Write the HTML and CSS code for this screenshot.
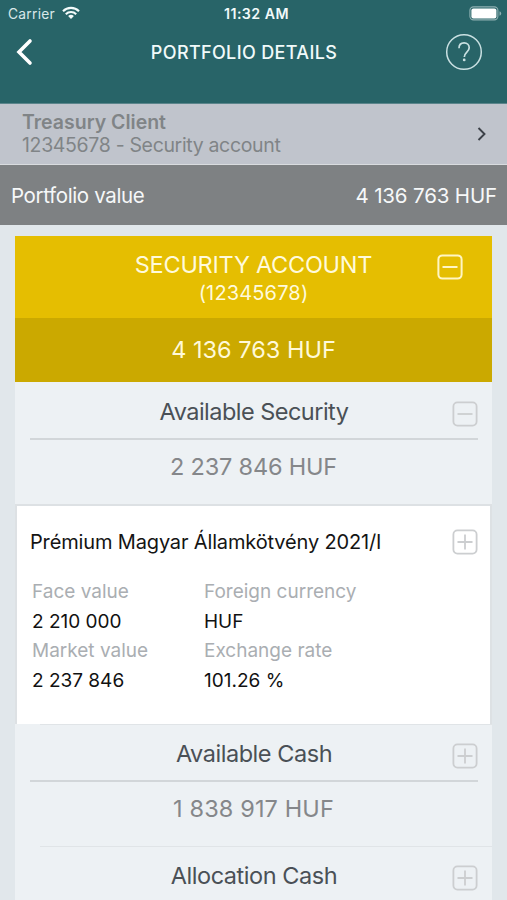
FILE: index.html
```html
<!DOCTYPE html>
<html lang="en">
<head>
<meta charset="utf-8">
<title>Portfolio details</title>
<link rel="stylesheet" href="styles.css">
</head>
<body>
<header class="header">
  <div class="status">
    <div class="status-left"><span class="carrier">Carrier</span>
      <svg class="wifi" width="18" height="14" viewBox="0 0 18 14"><g fill="none" stroke="#f4fbfb" stroke-width="2.1"><path d="M1 5.2a11.3 11.3 0 0 1 16 0"/><path d="M3.8 8.2a7.3 7.3 0 0 1 10.4 0"/></g><path d="M9 13l-2.9-2.9a4.1 4.1 0 0 1 5.8 0z" fill="#f4fbfb"/></svg>
    </div>
    <span class="clock">11:32 AM</span>
    <svg class="battery" width="33" height="15" viewBox="0 0 33 15"><rect x=".9" y=".9" width="28" height="13" rx="3.6" fill="none" stroke="#8fb0b2" stroke-width="1.1"/><rect x="2.4" y="2.4" width="25" height="10" rx="2" fill="#fff"/><path d="M30.5 5.3q1.7.5 1.7 2.2t-1.7 2.2z" fill="#8fb0b2"/></svg>
  </div>
  <div class="nav">
    <svg class="back" width="18" height="28" viewBox="0 0 18 28"><path d="M15 3L4 14l11 11" fill="none" stroke="#fff" stroke-width="3.6" stroke-linecap="round" stroke-linejoin="miter"/></svg>
    <h1 class="title">PORTFOLIO DETAILS</h1>
    <svg class="help" width="38" height="38" viewBox="0 0 38 38"><g fill="none" stroke="#c9e0e2"><circle cx="19" cy="19" r="17.3" stroke-width="1.5"/><path d="M14 15.2c0-3.4 2-5.4 5.1-5.4s5.1 2.2 5.1 5c0 4.2-4.9 4.6-4.9 9.2" stroke-width="1.7"/></g><circle cx="19.2" cy="26.9" r="1.4" fill="#c9e0e2"/></svg>
  </div>
</header>
<section class="client">
  <div><div class="client-name">Treasury Client</div><div class="client-account">12345678 - Security account</div></div>
  <svg width="10" height="16" viewBox="0 0 10 16"><path d="M1.5 2l6 6-6 6" fill="none" stroke="#3c4148" stroke-width="1.9"/></svg>
</section>
<section class="total"><span class="total-label">Portfolio value</span><span class="total-sum">4 136 763 HUF</span></section>
<main class="panel">
  <div class="account">
    <div class="account-name">SECURITY ACCOUNT</div><div class="account-no">(12345678)</div>
    <svg class="toggle toggle-gold" width="26" height="26" viewBox="0 0 26 26"><rect x="1.4" y="1.4" width="23.2" height="23.2" rx="4"/><path d="M5.5 13h15"/></svg>
  </div>
  <div class="account-sum">4 136 763 HUF</div>
  <section class="group">
    <div class="group-head">Available Security<svg class="toggle" width="26" height="26" viewBox="0 0 26 26"><rect x="1.4" y="1.4" width="23.2" height="23.2" rx="4"/><path d="M5.5 13h15"/></svg></div>
    <div class="group-sum">2 237 846 HUF</div>
  </section>
  <article class="bond">
    <div class="bond-head"><span>Prémium Magyar Államkötvény 2021/I</span><svg class="toggle" width="26" height="26" viewBox="0 0 26 26"><rect x="1.4" y="1.4" width="23.2" height="23.2" rx="4"/><path d="M5.5 13h15M13 5.5v15"/></svg></div>
    <dl class="facts">
      <div><dt>Face value</dt><dd>2 210 000</dd></div>
      <div><dt>Foreign currency</dt><dd>HUF</dd></div>
      <div><dt>Market value</dt><dd>2 237 846</dd></div>
      <div><dt>Exchange rate</dt><dd>101.26 %</dd></div>
    </dl>
  </article>
  <section class="group lined">
    <div class="group-head">Available Cash<svg class="toggle" width="26" height="26" viewBox="0 0 26 26"><rect x="1.4" y="1.4" width="23.2" height="23.2" rx="4"/><path d="M5.5 13h15M13 5.5v15"/></svg></div>
    <div class="group-sum cash-sum">1 838 917 HUF</div>
  </section>
  <section class="group lined last">
    <div class="group-head">Allocation Cash<svg class="toggle" width="26" height="26" viewBox="0 0 26 26"><rect x="1.4" y="1.4" width="23.2" height="23.2" rx="4"/><path d="M5.5 13h15M13 5.5v15"/></svg></div>
  </section>
</main>
</body>
</html>
```
FILE: styles.css
```css
* { box-sizing: border-box; }
html { height: 900px; overflow: hidden; }
body { margin: 0; height: 900px; overflow: hidden; display: flex; flex-direction: column; background: #e1e7eb; font-family: Inter, "Liberation Sans", sans-serif; }
svg { display: block; flex: none; }
.header { flex: none; height: 104px; background: #286468; color: #f1fafa; border-bottom: 1px solid #5b858b; }
.status { height: 28px; display: grid; grid-template-columns: 1fr auto 1fr; align-items: center; padding: 0 5px 0 8px; }
.status-left { display: flex; align-items: center; gap: 7px; }
.wifi { margin-bottom: 2px; }
.carrier { font-size: 13.8px; letter-spacing: .25px; color: #d8e8e9; }
.clock { font-size: 14.2px; font-weight: 600; letter-spacing: .45px; padding: 0 0 1px 3px; }
.battery { justify-self: end; margin-bottom: 2px; }
.nav { height: 48px; display: grid; grid-template-columns: 40px 1fr 40px; align-items: center; padding: 0 23px 0 15px; }
.title { margin: 0; padding: 1px 11px 0 0; text-align: center; font-size: 18px; font-weight: 500; line-height: 24px; letter-spacing: .35px; white-space: nowrap; }
.help { margin-left: 1px; }
.client { flex: none; height: 61px; display: flex; justify-content: space-between; align-items: center; padding: 0 20px 0 22px; background: #c0c4cc; color: #808487; border-bottom: 1px solid #d9dcdf; line-height: 24px; }
.client-name { font-size: 19.5px; font-weight: 600; }
.client-account { font-size: 19.5px; letter-spacing: -.34px; margin-top: -1px; padding-bottom: 2px; }
.total { flex: none; height: 60px; display: flex; justify-content: space-between; align-items: center; padding: 1px 10px 0 11px; background: #7e8183; color: #f6f8f9; font-size: 20.5px; }
.total-label { letter-spacing: -.36px; }
.total-sum { letter-spacing: -.15px; }
.panel { flex: none; width: 477px; height: 664px; overflow: hidden; margin: 11px 0 0 15px; background: #edf1f4; }
.account { position: relative; height: 82px; background: #e5be01; color: #fffadb; text-align: center; padding-top: 14px; }
.account-name { font-size: 23.5px; line-height: 30px; letter-spacing: -.26px; }
.account-no { font-size: 20px; line-height: 26px; letter-spacing: .15px; }
.account-sum { height: 64px; background: #cba900; color: #fff9d8; text-align: center; font-size: 23.5px; line-height: 64px; }
.toggle { fill: none; stroke: #ccced0; stroke-width: 1.8; }
.toggle-gold { position: absolute; right: 29px; top: 18px; stroke: #fff6c4; stroke-width: 2; }
.group { height: 122px; }
.lined { background: linear-gradient(#e0e4e7, #e0e4e7) 25px 0 / 100% 1px no-repeat; }
.group-head { position: relative; height: 58px; margin: 0 14px 0 15px; border-bottom: 2px solid #d2d6d9; text-align: center; font-size: 23.5px; line-height: 60px; letter-spacing: -.52px; color: #4a5056; }
.lined .group-head { letter-spacing: -.45px; }
.group-head .toggle { position: absolute; right: 0; top: 19px; }
.group-sum { text-align: center; font-size: 23.5px; line-height: 54px; letter-spacing: -.2px; color: #85878a; }
.cash-sum { letter-spacing: .12px; }
.last { height: 54px; overflow: hidden; }
.bond { height: 220px; background: #fff; border: 2px solid #dde1e4; border-bottom: 0; padding: 0 12px 0 13px; }
.bond-head { display: flex; justify-content: space-between; align-items: center; height: 72px; font-size: 20px; letter-spacing: -.15px; color: #141414; }
.facts { display: grid; grid-template-columns: 172px 1fr; margin: -1px 0 0; padding-left: 2px; font-size: 19px; line-height: 29.7px; }
dt { color: #aaaeb2; }
dd { margin: 0; color: #111; }
```
